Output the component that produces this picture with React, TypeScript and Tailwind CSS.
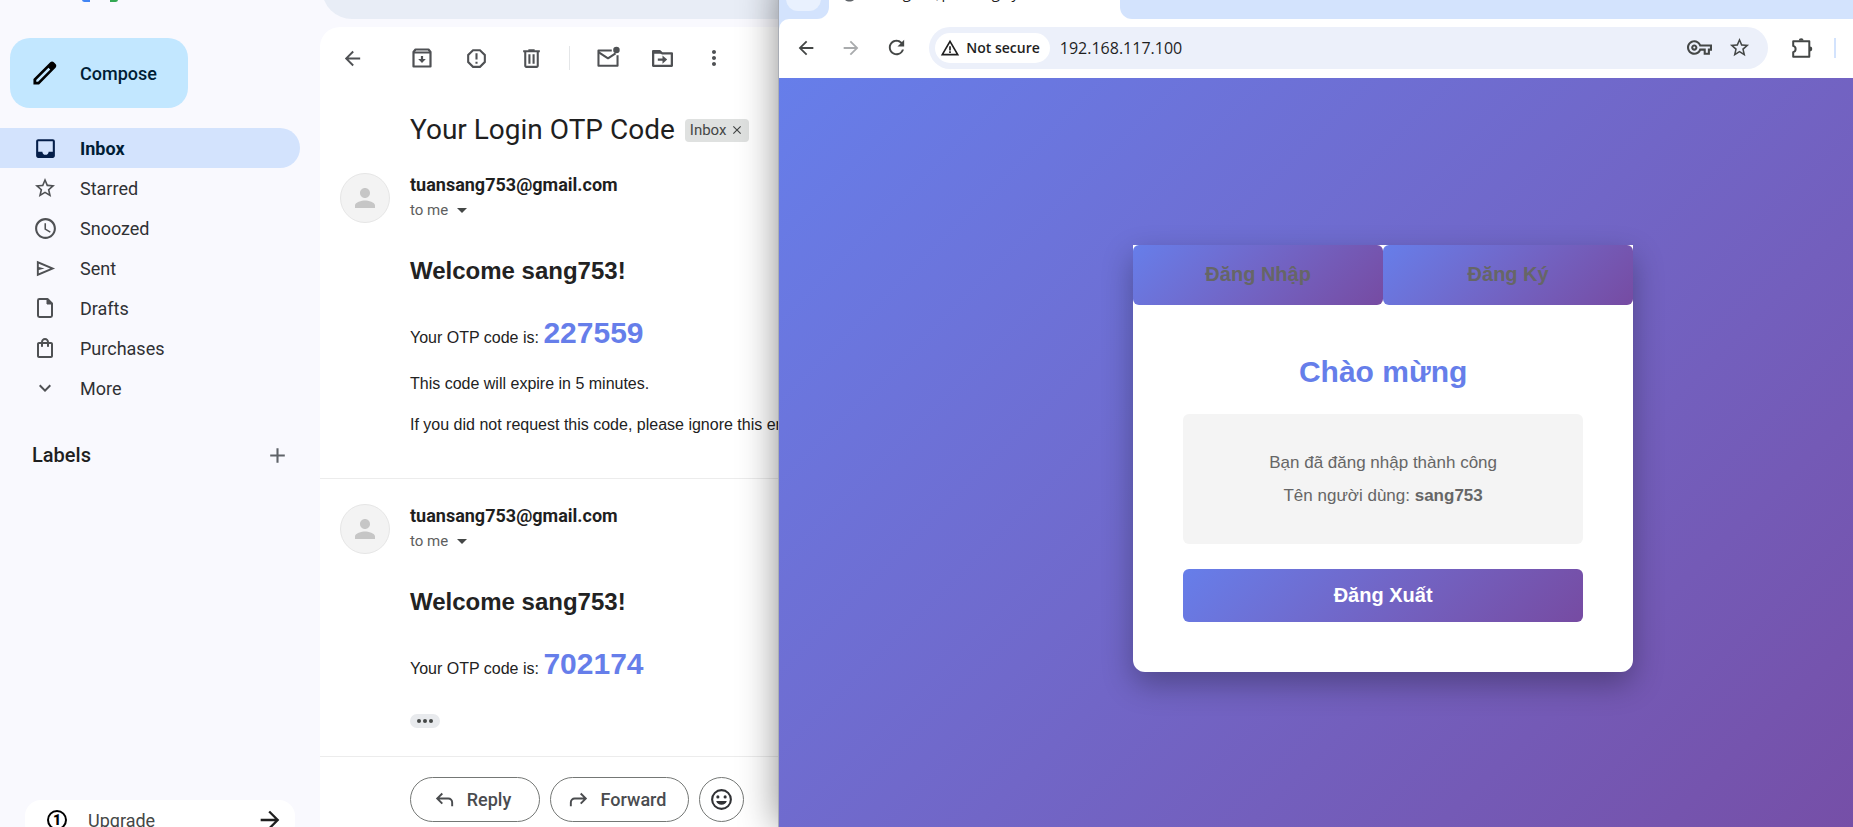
import type { ReactNode } from "react";
import {
  MdAccessTime,
  MdAdd,
  MdArrowBack,
  MdArrowDropDown,
  MdArrowForward,
  MdClose,
  MdExpandMore,
  MdInbox,
  MdMoreVert,
  MdOutlineShoppingBag,
  MdOutlineVpnKey,
  MdPerson,
  MdPublic,
  MdRefresh,
  MdReportGmailerrorred,
  MdStarBorder,
  MdWarningAmber,
} from "react-icons/md";

function Symbol({ d, size, className = "" }: { d: string; size: number; className?: string }) {
  return (
    <svg viewBox="0 -960 960 960" width={size} height={size} fill="currentColor" className={className} aria-hidden="true">
      <path d={d} />
    </svg>
  );
}

const EDIT =
  "M200-200h57l391-391-57-57-391 391v57Zm-90 90v-180l538-537q12-11 26.500-17t30.500-6q16 0 31 6t26 18l55 56q12 11 17.500 26t5.500 30q0 16-5.500 30.500T817-647L290-110H110Z";
const SEND = "M120-160v-640l760 320-760 320Zm80-120 474-200-474-200v140l240 60-240 60v140Z";
const REPLY =
  "M760-200v-160q0-50-35-85t-85-35H273l144 144-57 56-240-240 240-240 57 56-144 144h367q83 0 141.5 58.5T840-360v160h-80Z";
const TRASH =
  "M280-120q-33 0-56.5-23.5T200-200v-520h-40v-80h200v-40h240v40h200v80h-40v520q0 33-23.5 56.5T680-120H280Zm400-600H280v520h400v-520ZM360-280h80v-360h-80v360Zm160 0h80v-360h-80v360Z";

function DraftIcon() {
  return (
    <svg viewBox="0 0 24 24" width={24} height={24} fill="none" stroke="currentColor" strokeWidth="2" strokeLinejoin="round" aria-hidden="true">
      <path d="M14.5 3H6.400C5.600 3 5 3.600 5 4.400v15.200c0 .8.6 1.400 1.400 1.400h11.200c.8 0 1.400-.6 1.400-1.400V7.500z" />
      <path d="M14 3v5h5z" fill="currentColor" strokeWidth="1" />
    </svg>
  );
}

function ArchiveIcon() {
  return (
    <svg viewBox="0 0 24 24" width={24} height={24} fill="none" stroke="currentColor" strokeWidth="2.200" strokeLinejoin="round" aria-hidden="true">
      <path d="M5.500 3.500h13l2 2.500v14.500h-17V6z" />
      <path d="M3.500 6.500h17" />
      <path d="M12 10v4" />
      <path d="M8.200 13h7.600L12 17z" fill="currentColor" stroke="none" />
    </svg>
  );
}

function UnreadIcon() {
  return (
    <svg viewBox="0 0 24 24" width={26} height={26} fill="none" stroke="currentColor" strokeWidth="1.900" strokeLinejoin="round" aria-hidden="true">
      <path d="M15.500 5H3.200v14.200h17.600V9.500" />
      <path d="M3.200 6.500 12 12.300l7-4.600" />
      <circle cx="19.800" cy="4.500" r="3" fill="currentColor" stroke="none" />
    </svg>
  );
}

function MoveIcon() {
  return (
    <svg viewBox="0 0 24 24" width={25} height={25} fill="none" stroke="currentColor" strokeWidth="2.200" strokeLinejoin="round" aria-hidden="true">
      <path d="M3 5h6.500l2 2H21v12H3z" />
      <path d="M3 4.500h6.500l2.500 3H3z" fill="currentColor" stroke="none" />
      <path d="M7.500 13H13" />
      <path d="M12 9l4.500 4-4.500 4z" fill="currentColor" stroke="none" />
    </svg>
  );
}

function SmileIcon() {
  return (
    <svg viewBox="0 0 24 24" width={25} height={25} fill="currentColor" aria-hidden="true">
      <circle cx="12" cy="12" r="9" fill="none" stroke="currentColor" strokeWidth="2" />
      <circle cx="8.500" cy="9.500" r="1.500" />
      <circle cx="15.500" cy="9.500" r="1.500" />
      <path d="M6.900 13.500h10.200a5.400 5.400 0 0 1-10.200 0z" />
    </svg>
  );
}

function ExtensionIcon() {
  return (
    <svg viewBox="0 0 24 24" width={24} height={24} fill="none" stroke="currentColor" strokeWidth="2" strokeLinejoin="round" aria-hidden="true">
      <path d="M3.200 5.200H19.300V20.800H3.200V16.100a3.200 3.200 0 0 0 0-6.200z" />
      <path d="M8.800 4.600a2.400 2.400 0 0 1 4.800 0zM19.900 10.600a2.400 2.400 0 0 1 0 4.800z" fill="currentColor" stroke="none" />
    </svg>
  );
}

function MailLogo() {
  return (
    <svg viewBox="0 0 36 27" width={36} height={27} aria-hidden="true">
      <path d="M0 6v18.500A2.500 2.500 0 0 0 2.500 27H8V12z" fill="#4285f4" />
      <path d="M28 12v15h5.500a2.500 2.500 0 0 0 2.500-2.500V6z" fill="#34a853" />
      <path d="M8 12V2.500l10 7.500 10-7.500V12l-10 7.500z" fill="#ea4335" />
      <path d="M0 6V4C0 .6 3.700-1 6.300 1L8 2.500V12z" fill="#c5221f" />
      <path d="M28 12V2.500L29.700 1C32.300-1 36 .6 36 4v2z" fill="#fbbc04" />
    </svg>
  );
}

const folders: { name: string; icon: ReactNode; active?: boolean }[] = [
  { name: "Inbox", icon: <MdInbox size={25} />, active: true },
  { name: "Starred", icon: <MdStarBorder size={24} /> },
  { name: "Snoozed", icon: <MdAccessTime size={25} /> },
  { name: "Sent", icon: <Symbol d={SEND} size={23} /> },
  { name: "Drafts", icon: <DraftIcon /> },
  { name: "Purchases", icon: <MdOutlineShoppingBag size={24} /> },
  { name: "More", icon: <MdExpandMore size={24} /> },
];

function Sidebar() {
  return (
    <aside className="flex w-[320px] shrink-0 flex-col pt-[11px]">
      <button className="ml-[10px] flex h-[70px] w-[178px] items-center rounded-[20px] bg-[#c2e7ff] pl-5 text-[18px] font-medium text-[#001d35]">
        <Symbol d={EDIT} size={30} className="mr-5 text-black" />
        Compose
      </button>
      <nav className="mt-5 mr-5 flex flex-col">
        {folders.map((f) => (
          <a
            key={f.name}
            href="#"
            className={
              f.active
                ? "flex h-10 items-center rounded-r-full bg-[#d3e3fd] text-[18px] font-bold text-[#001d35]"
                : "flex h-10 items-center text-[18px] text-[#303134]"
            }
          >
            <span className={f.active ? "mr-[22px] ml-8 flex w-[26px] justify-center text-[#041e49]" : "mr-[22px] ml-8 flex w-[26px] justify-center text-[#4f5154]"}>
              {f.icon}
            </span>
            {f.name}
          </a>
        ))}
      </nav>
      <div className="mt-[27px] flex items-center justify-between pr-[30px] pl-8">
        <h2 className="text-[20px] leading-10 font-medium text-[#1f1f1f]">Labels</h2>
        <button aria-label="Create new label" className="text-[#5f6368]">
          <MdAdd size={25} />
        </button>
      </div>
      <a href="#" className="mt-auto mr-[25px] ml-[25px] flex h-10 items-center rounded-[16px] bg-white pr-[11px] pl-[22px] text-[18px] text-[#444746]">
        <span className="flex size-5 items-center justify-center rounded-full border-2 border-black text-[14px] leading-none font-black text-black">1</span>
        <span className="ml-[21px] flex-1">Upgrade</span>
        <MdArrowForward size={28} className="text-[#1f1f1f]" />
      </a>
    </aside>
  );
}

function ToolButton({ label, children }: { label: string; children: ReactNode }) {
  return (
    <button aria-label={label} className="flex w-[55px] justify-center text-[#4f5154]">
      {children}
    </button>
  );
}

function Toolbar() {
  return (
    <div className="flex h-[62px] items-center pl-[5px]">
      <ToolButton label="Back">
        <MdArrowBack size={23} />
      </ToolButton>
      <span className="w-[14px]" />
      <ToolButton label="Archive">
        <ArchiveIcon />
      </ToolButton>
      <ToolButton label="Report spam">
        <MdReportGmailerrorred size={25} />
      </ToolButton>
      <ToolButton label="Delete">
        <Symbol d={TRASH} size={25} />
      </ToolButton>
      <span className="mx-[10px] h-6 w-px bg-[#e4e6e8]" />
      <ToolButton label="Mark as unread">
        <UnreadIcon />
      </ToolButton>
      <ToolButton label="Move to">
        <MoveIcon />
      </ToolButton>
      <span className="-ml-1">
        <ToolButton label="More">
          <MdMoreVert size={24} />
        </ToolButton>
      </span>
    </div>
  );
}

function Message({ code, children }: { code: string; children: ReactNode }) {
  return (
    <article className="flex pl-5">
      <span className="flex size-[50px] shrink-0 items-center justify-center rounded-full border border-[#e6e6e6] bg-[#f3f3f3] text-[#c6c6c6]">
        <MdPerson size={30} />
      </span>
      <div className="ml-5">
        <p className="text-[18px] leading-6 font-bold text-[#1f1f1f]">tuansang753@gmail.com</p>
        <p className="flex items-center text-[15px] leading-[26px] text-[#5e5e5e]">
          to me
          <MdArrowDropDown size={24} className="ml-[2px] text-[#444746]" />
        </p>
        <div className="font-['Liberation_Sans',Arial,sans-serif] text-[16px] text-[#222]">
          <h3 className="mt-[34px] text-[24px] leading-7 font-bold">Welcome sang753!</h3>
          <p className="mt-[30px] leading-9">
            Your OTP code is: <strong className="text-[30px] text-[#667eea]">{code}</strong>
          </p>
          {children}
        </div>
      </div>
    </article>
  );
}

function MailWindow() {
  return (
    <section className="-mt-[50px] -mb-[13px] flex w-[42%] min-w-0 flex-col overflow-hidden bg-[#f9f9fe] font-[Roboto,sans-serif] whitespace-nowrap">
      <header className="flex h-[77px] shrink-0 items-center">
        <div className="w-[322px] shrink-0 pl-[82px]">
          <MailLogo />
        </div>
        <div className="h-[60px] flex-1 rounded-l-full bg-[#e8edf6]" />
      </header>
      <div className="flex min-h-0 flex-1">
        <Sidebar />
        <main className="min-w-0 flex-1 overflow-hidden rounded-tl-[20px] bg-white">
          <Toolbar />
          <div className="flex h-[84px] items-center pb-[2px] pl-[90px]">
            <h1 className="text-[28px] text-[#1f1f1f]">Your Login OTP Code</h1>
            <span className="ml-[10px] flex h-[23px] items-center gap-1 rounded-[4px] bg-[#dfe1e0] px-[5px] text-[15px] text-[#444746]">
              Inbox
              <MdClose size={14} />
            </span>
          </div>
          <Message code="227559">
            <p className="mt-4 leading-6">This code will expire in 5 minutes.</p>
            <p className="mt-[17px] leading-6">If you did not request this code, please ignore this email.</p>
          </Message>
          <hr className="mt-[41px] mb-[25px] border-[#ececec]" />
          <Message code="702174">
            <button aria-label="Show trimmed content" className="mt-[27px] flex h-[14px] w-[30px] items-center justify-center gap-[2px] rounded-full bg-[#e8eaed]">
              <span className="size-1 rounded-full bg-[#444746]" />
              <span className="size-1 rounded-full bg-[#444746]" />
              <span className="size-1 rounded-full bg-[#444746]" />
            </button>
          </Message>
          <hr className="mt-7 border-[#ececec]" />
          <div className="mt-5 flex gap-[10px] pl-[90px] text-[18px] font-medium text-[#4a4c4f]">
            <button className="flex h-[45px] w-[130px] items-center justify-center gap-[11px] rounded-full border border-[#747775] pr-[6px]">
              <Symbol d={REPLY} size={23} />
              Reply
            </button>
            <button className="flex h-[45px] w-[139px] items-center justify-center gap-[11px] rounded-full border border-[#747775] pr-[6px]">
              <Symbol d={REPLY} size={23} className="-scale-x-100" />
              Forward
            </button>
            <button aria-label="Add reaction" className="flex size-[45px] items-center justify-center rounded-full border border-[#747775] text-[#303134]">
              <SmileIcon />
            </button>
          </div>
        </main>
      </div>
    </section>
  );
}

function LoginPage() {
  return (
    <div className="-mr-[134px] -mb-3 flex flex-1 items-center justify-center bg-linear-135 from-[#667eea] to-[#764ba2] font-['Liberation_Sans',Arial,sans-serif]">
      <div className="w-[500px] rounded-b-[12px] bg-white text-center shadow-[0_12px_31px_rgba(0,0,0,0.3)]">
        <div className="grid grid-cols-2">
          <button className="h-[60px] rounded-[6px] bg-linear-135 from-[#667eea] to-[#764ba2] pb-[2px] text-[20px] font-bold text-[#666]">Đăng Nhập</button>
          <button className="h-[60px] rounded-[6px] bg-linear-135 from-[#667eea] to-[#764ba2] pb-[2px] text-[20px] font-bold text-[#666]">Đăng Ký</button>
        </div>
        <div className="p-[50px]">
          <h2 className="text-[30px] leading-[34px] font-bold text-[#667eea]">Chào mừng</h2>
          <div className="mt-[25px] rounded-[6px] bg-[#f4f4f4] py-8 text-[17px] leading-[33px] text-[#666]">
            <p>Bạn đã đăng nhập thành công</p>
            <p>
              Tên người dùng: <strong>sang753</strong>
            </p>
          </div>
          <button className="mt-[25px] h-[53px] w-full rounded-[6px] bg-linear-135 from-[#667eea] to-[#764ba2] pb-[2px] text-[20px] font-bold text-white">
            Đăng Xuất
          </button>
        </div>
      </div>
    </div>
  );
}

function BrowserWindow() {
  return (
    <section className="z-10 -mt-[22px] flex min-w-0 flex-1 flex-col border-l border-[#a9adb5] bg-white font-['Open_Sans',sans-serif] shadow-[0_0_36px_rgba(0,0,0,0.45)]">
      <div className="flex h-[41px] shrink-0">
        <div className="w-[50px] rounded-br-[12px] bg-[#d3e3fd] pl-[7px]">
          <div className="h-[33px] w-[35px] rounded-[12px] bg-[#e9f1fe]" />
        </div>
        <div className="flex w-[291px] gap-4 bg-white pt-1 pl-3 text-[15px] text-[#1f1f1f]">
          <MdPublic size={17} className="mt-1 text-[#5f6368]" />
          <span className="leading-5">Đăng nhập - Đăng ký</span>
        </div>
        <div className="flex-1 rounded-bl-[12px] bg-[#d3e3fd]" />
      </div>
      <div className="shrink-0 bg-linear-to-r from-[#d3e3fd] from-50% to-white to-50%">
        <div className="flex h-[59px] items-center rounded-tl-[10px] bg-white pb-[2px] text-[#444746]">
          <button aria-label="Back" className="flex w-[45px] justify-center pl-[9px]">
            <MdArrowBack size={22} />
          </button>
          <button aria-label="Forward" className="flex w-[45px] justify-center pl-[9px] text-[#a9abad]">
            <MdArrowForward size={22} />
          </button>
          <button aria-label="Reload" className="mr-[15px] flex w-[45px] justify-center pl-[9px]">
            <MdRefresh size={23} />
          </button>
          <div className="flex h-[42px] min-w-0 flex-1 items-center rounded-full bg-[#ecf0fa] pr-[17px] pl-[6px]">
            <button className="flex h-[30px] items-center gap-[6px] rounded-full bg-white pr-[10px] pl-[5px] text-[14px] font-semibold text-[#1f1f1f]">
              <MdWarningAmber size={20} />
              Not secure
            </button>
            <input aria-label="Address" defaultValue="192.168.117.100" className="ml-[10px] min-w-0 flex-1 bg-transparent text-[16px] text-[#1f1f1f] outline-none" />
            <button aria-label="Passwords">
              <MdOutlineVpnKey size={25} />
            </button>
            <button aria-label="Bookmark" className="ml-4">
              <MdStarBorder size={23} />
            </button>
          </div>
          <button aria-label="Extensions" className="ml-[22px]">
            <ExtensionIcon />
          </button>
          <span className="mr-[17px] ml-5 h-5 w-[2px] bg-[#d3e3fd]" />
        </div>
      </div>
      <LoginPage />
    </section>
  );
}

export default function App() {
  return (
    <div className="flex h-screen overflow-hidden bg-white">
      <MailWindow />
      <BrowserWindow />
    </div>
  );
}
